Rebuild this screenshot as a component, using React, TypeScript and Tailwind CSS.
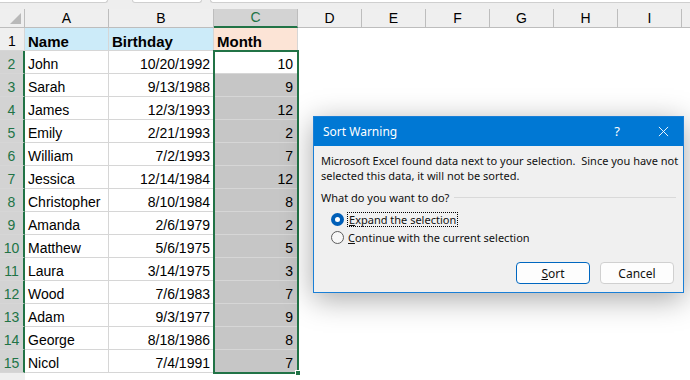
import React from "react";

const ROWS: [string, string, string][] = [
  ["John", "10/20/1992", "10"],
  ["Sarah", "9/13/1988", "9"],
  ["James", "12/3/1993", "12"],
  ["Emily", "2/21/1993", "2"],
  ["William", "7/2/1993", "7"],
  ["Jessica", "12/14/1984", "12"],
  ["Christopher", "8/10/1984", "8"],
  ["Amanda", "2/6/1979", "2"],
  ["Matthew", "5/6/1975", "5"],
  ["Laura", "3/14/1975", "3"],
  ["Wood", "7/6/1983", "7"],
  ["Adam", "9/3/1977", "9"],
  ["George", "8/18/1986", "8"],
  ["Nicol", "7/4/1991", "7"],
];

const EXTRA = ["D", "E", "F", "G", "H", "I"];

function Radio({ checked }: { checked: boolean }) {
  return checked ? (
    <span className="flex h-[13px] w-[13px] items-center justify-center rounded-full bg-[#005fb8]">
      <span className="h-[5px] w-[5px] rounded-full bg-white" />
    </span>
  ) : (
    <span className="h-[13px] w-[13px] rounded-full border border-[#5d5d5d] bg-[#f7f7f7]" />
  );
}

function SortWarning() {
  return (
    <div
      className="absolute left-[313px] top-[116px] flex h-[177px] w-[371px] flex-col border border-[#1a7fd6] bg-[#f0f0f0] shadow-[0_6px_28px_rgba(0,0,0,0.35)]"
      style={{ fontFamily: '"Noto Sans", "Open Sans", sans-serif' }}
    >
      {/* title bar */}
      <div className="flex h-[29px] items-center bg-[#0078d4] pl-[9px] text-[12px] text-white">
        <span>Sort Warning</span>
        <span className="ml-auto mr-[38px] text-[13px]">?</span>
        <svg viewBox="0 0 12 12" className="mr-[14px] h-[11px] w-[11px]" stroke="white" strokeWidth="1">
          <path d="M1 1l10 10M11 1L1 11" />
        </svg>
      </div>
      <div className="flex flex-1 flex-col whitespace-nowrap px-[7px] pt-[7px] text-[11px] leading-[15px] text-[#111]">
        <p>
          Microsoft Excel found data next to your selection.&nbsp; Since you have not
          <br />
          selected this data, it will not be sorted.
        </p>
        <div className="mt-[7px] flex items-center gap-[5px]">
          <span>What do you want to do?</span>
          <span className="h-px flex-1 bg-[#d9d9d9]" />
        </div>
        <div className="mt-[7px] flex flex-col gap-[3px] pl-[10px]">
          <label className="flex items-center gap-[3px]">
            <Radio checked />
            <span className="border border-dotted border-black px-px leading-[13px]">
              <u>E</u>xpand the selection
            </span>
          </label>
          <label className="flex items-center gap-[4px]">
            <Radio checked={false} />
            <span>
              <u>C</u>ontinue with the current selection
            </span>
          </label>
        </div>
        <div className="mt-auto mb-[8px] flex justify-end gap-[10px] pr-[2px]">
          <button className="h-[22px] w-[74px] rounded-[4px] border border-[#0067c0] bg-[#fdfdfd] text-[12px]">
            <u>S</u>ort
          </button>
          <button className="h-[22px] w-[74px] rounded-[4px] border border-[#d0d0d0] bg-[#fdfdfd] text-[12px]">
            Cancel
          </button>
        </div>
      </div>
    </div>
  );
}

export default function App() {
  const cell = "box-border h-[23px] border-b border-r border-[#d6d6d6] pb-[0px] leading-[17px]";
  const hdr = "box-border flex h-[19px] items-center justify-center border-b border-r border-[#bdbdbd] text-[14px]";
  return (
    <div
      className="relative h-[380px] w-[690px] overflow-hidden bg-white"
      style={{ fontFamily: '"Liberation Sans", Arial, sans-serif' }}
    >
      {/* formula strip */}
      <div className="flex h-[9px] gap-[24px] bg-[#eeeeee]">
        <div className="h-[3px] w-[108px] rounded-br-[4px] border-b border-r border-[#cfcfcf] bg-white" />
        <div className="h-[3px] w-[70px] rounded-b-[4px] border-b border-x border-[#cfcfcf] bg-white" />
        <div className="-ml-[16px] h-[3px] flex-1 rounded-bl-[4px] border-b border-l border-[#cfcfcf] bg-white" />
      </div>

      <div className="grid grid-cols-[25px_84px_105px_84px_64px_64px_64px_64px_64px_64px_1fr]">
        {/* column headers */}
        <div className={`${hdr} relative bg-[#efefef]`}>
          <svg viewBox="0 0 10 10" className="absolute bottom-[3px] right-[3px] h-[11px] w-[11px]">
            <path d="M10 0V10H0z" fill="#b9b9b9" />
          </svg>
        </div>
        <div className={`${hdr} bg-[#efefef]`}>A</div>
        <div className={`${hdr} bg-[#efefef]`}>B</div>
        <div className={`${hdr} border-b-2 border-b-[#217346] bg-[#d3d3d3] text-[#217346]`}>C</div>
        {EXTRA.map((c) => (
          <div key={c} className={`${hdr} bg-[#efefef]`}>
            {c}
          </div>
        ))}
        <div className={`${hdr} border-r-0 bg-[#efefef]`} />

        {/* row 1 */}
        <div className={`${cell} flex items-end justify-center bg-[#efefef] text-[14px]`}>1</div>
        <div className={`${cell} flex items-end bg-[#ccebf9] pl-[3px] text-[15px] font-bold`}>Name</div>
        <div className={`${cell} flex items-end bg-[#ccebf9] pl-[3px] text-[15px] font-bold`}>Birthday</div>
        <div className={`${cell} flex items-end bg-[#fce4d6] pl-[3px] text-[15px] font-bold`}>Month</div>
        {EXTRA.map((c) => (
          <div key={c} className="h-[23px]" />
        ))}
        <div />

        {ROWS.map(([name, bday, month], i) => (
          <React.Fragment key={name}>
            <div className={`${cell} flex items-end justify-center border-r-2 border-r-[#217346] bg-[#d3d3d3] text-[14px] text-[#217346]`}>
              {i + 2}
            </div>
            <div className={`${cell} flex items-end pl-[3px] text-[14px]`}>{name}</div>
            <div className={`${cell} flex items-end justify-end pr-[3px] text-[14px]`}>{bday}</div>
            <div className={`${cell} flex items-end justify-end pr-[4px] text-[14px] ${i === 0 ? "bg-white" : "bg-[#c6c6c6]"}`}>
              {month}
            </div>
            {EXTRA.map((c) => (
              <div key={c} className="h-[23px]" />
            ))}
            <div />
          </React.Fragment>
        ))}

        <div className="flex h-[23px] items-start justify-center bg-[#efefef] pt-[5px] text-[14px] leading-[16px]">16</div>
        <div className="col-span-10" />
      </div>

      {/* selection box around C2:C15 */}
      <div className="absolute left-[213px] top-[50px] h-[324px] w-[86px] border-2 border-[#217346]" />
      <div className="absolute left-[295px] top-[370px] h-[6px] w-[6px] border border-white bg-[#217346]" />

      <SortWarning />
    </div>
  );
}
